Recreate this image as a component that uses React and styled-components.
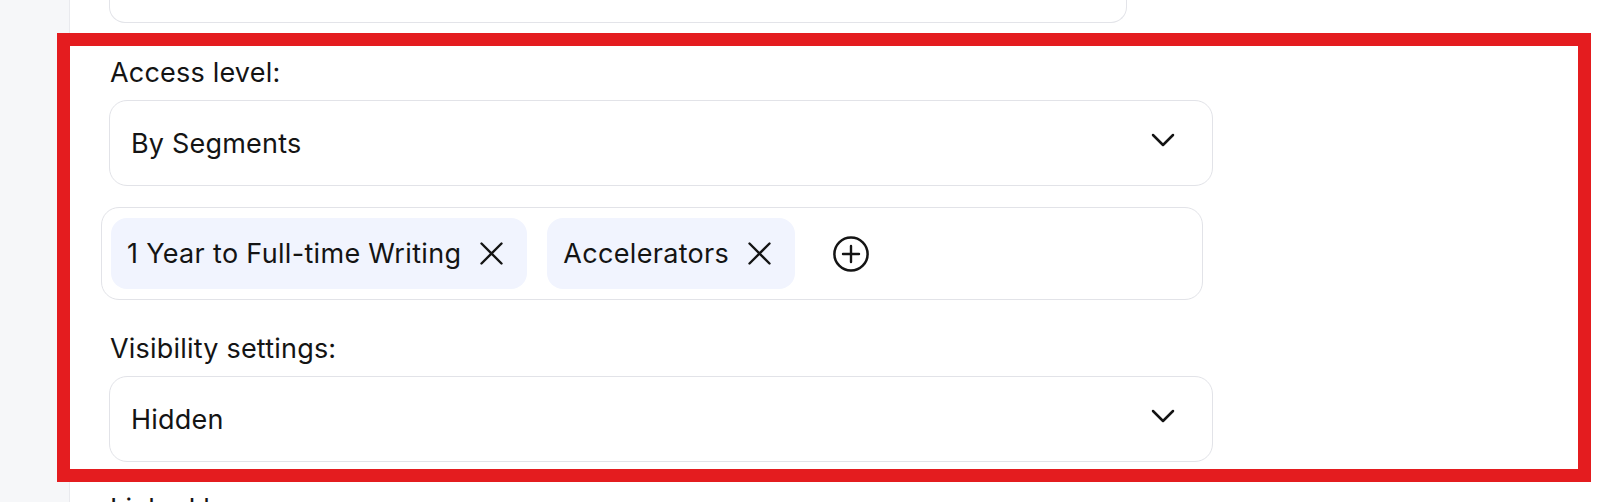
import React from 'react'
import styled, { createGlobalStyle } from 'styled-components'

const GlobalStyle = createGlobalStyle`
  html, body {
    margin: 0;
    padding: 0;
    background: #ffffff;
    font-family: Inter, "Noto Sans", sans-serif;
    color: #141414;
    overflow: hidden;
  }
`

const Page = styled.div`
  position: relative;
  display: flex;
  width: 1600px;
  height: 502px;
  overflow: hidden;
`

const Sidebar = styled.div`
  width: 69px;
  flex-shrink: 0;
  background: #f6f7f9;
  border-right: 1px solid #e9eaee;
`

const Main = styled.div`
  flex: 1;
  padding-left: 39px;
`

const Form = styled.div`
  width: 1104px;
  display: flex;
  flex-direction: column;
  font-size: 27px;
  letter-spacing: 0.2px;
`

const PrevField = styled.div`
  width: 1018px;
  height: 23px;
  box-sizing: border-box;
  border: 1px solid #e3e4e9;
  border-top: none;
  border-radius: 0 0 16px 16px;
`

const Label = styled.div`
  line-height: 32px;
  margin-top: ${(p) => p.$top}px;
  margin-bottom: 11px;
  padding-left: 1px;
`

const Select = styled.div`
  height: 86px;
  box-sizing: border-box;
  border: 1px solid #e2e3e8;
  border-radius: 18px;
  padding: 0 37px 0 21px;
  display: flex;
  align-items: center;
  justify-content: space-between;
`

const Chevron = styled.svg`
  width: 24px;
  height: 14px;
  margin-top: -6px;
`

const ChipBox = styled.div`
  margin-top: 21px;
  margin-left: -8px;
  width: 1102px;
  height: 93px;
  box-sizing: border-box;
  border: 1px solid #e2e3e8;
  border-radius: 18px;
  padding: 0 9px;
  display: flex;
  align-items: center;
  gap: 20px;
`

const Chip = styled.div`
  height: 71px;
  padding: 0 24px 0 16px;
  background: #f1f4fe;
  border-radius: 16px;
  display: flex;
  align-items: center;
  gap: 19px;
  letter-spacing: 0.32px;
`

const Cross = styled.svg`
  width: 23px;
  height: 23px;
`

const AddButton = styled.svg`
  width: 36px;
  height: 36px;
  margin-left: 18px;
`

const Highlight = styled.div`
  position: absolute;
  left: 57px;
  top: 33px;
  width: 1534px;
  height: 449px;
  box-sizing: border-box;
  border: 13px solid #e41c1f;
  pointer-events: none;
`

const ChevronIcon = () => (
  <Chevron viewBox="0 0 24 14" fill="none">
    <polyline points="2,2 12,12 22,2" stroke="#141414" strokeWidth="2.5" strokeLinecap="round" strokeLinejoin="round" />
  </Chevron>
)

const CrossIcon = () => (
  <Cross viewBox="0 0 23 23" fill="none">
    <path d="M1.5 1.5 L21.5 21.5 M21.5 1.5 L1.5 21.5" stroke="#141414" strokeWidth="2.4" strokeLinecap="round" />
  </Cross>
)

const AddIcon = () => (
  <AddButton viewBox="0 0 36 36" fill="none">
    <circle cx="18" cy="18" r="16.6" stroke="#141414" strokeWidth="2.5" />
    <path d="M18 10 V26 M10 18 H26" stroke="#141414" strokeWidth="2.4" strokeLinecap="round" />
  </AddButton>
)

const segments = ['1 Year to Full-time Writing', 'Accelerators']

export default function App() {
  return (
    <>
      <GlobalStyle />
      <Page>
        <Sidebar />
        <Main>
          <Form>
            <PrevField />

            <Label $top={34}>Access level:</Label>
            <Select>
              <span>By Segments</span>
              <ChevronIcon />
            </Select>

            <ChipBox>
              {segments.map((s) => (
                <Chip key={s}>
                  <span>{s}</span>
                  <CrossIcon />
                </Chip>
              ))}
              <AddIcon />
            </ChipBox>

            <Label $top={33}>Visibility settings:</Label>
            <Select>
              <span>Hidden</span>
              <ChevronIcon />
            </Select>

            <Label $top={31}>Linked lessons:</Label>
          </Form>
        </Main>
        <Highlight />
      </Page>
    </>
  )
}
